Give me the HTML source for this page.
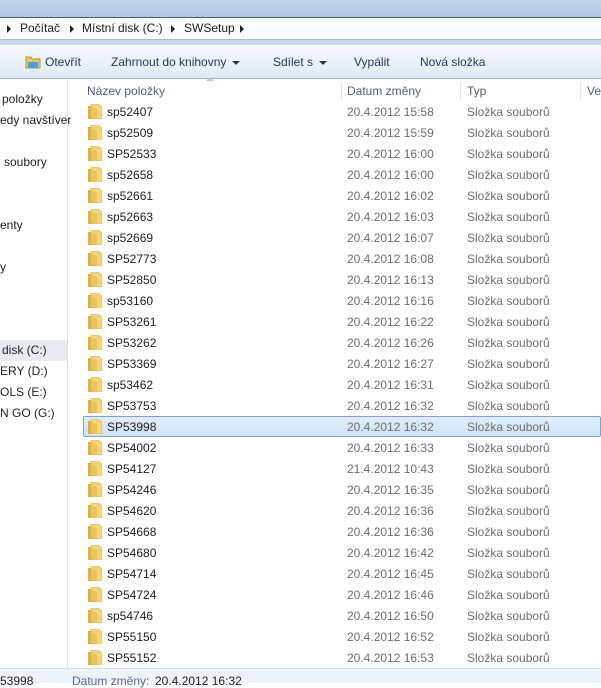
<!DOCTYPE html>
<html><head><meta charset="utf-8"><style>
*{margin:0;padding:0;box-sizing:border-box}
body{width:601px;height:683px;overflow:hidden;background:#fff;font-family:"Liberation Sans","DejaVu Sans",sans-serif;font-size:12px;color:#1e1e1e;position:relative}
.abs{position:absolute;white-space:nowrap}
#title{left:0;top:0;width:601px;height:18px;background:linear-gradient(#c4d5ea,#b3c8e2);border-bottom:1px solid #4a5a70}
#addr{left:0;top:18px;width:601px;height:22px;background:#fbfcfe;border-bottom:1px solid #a9b8cc}
#gap{left:0;top:40px;width:601px;height:5px;background:#c9daef}
#tool{left:0;top:45px;width:601px;height:34px;background:linear-gradient(#f5f9fd,#e0eaf6);border-bottom:1px solid #a0b2c8;border-top:1px solid #fff}
#nav{left:0;top:80px;width:68px;height:588px;border-right:1px solid #dde4ee}
#status{left:0;top:668px;width:601px;height:15px;background:#eef3fa;border-top:1px solid #d6e0ec}
.tri{display:inline-block;width:0;height:0;border-top:4px solid transparent;border-bottom:4px solid transparent;border-left:4px solid #222}
.dd{display:inline-block;width:0;height:0;border-left:4px solid transparent;border-right:4px solid transparent;border-top:4px solid #333;vertical-align:middle;margin-left:6px}
.row{position:absolute;left:83px;width:518px;height:21px}
.row span{position:absolute;top:4px}
.sel{background:linear-gradient(#e3eefb,#cfe2f8);box-shadow:inset 0 0 0 1px #7da2ce;border-radius:2px}
.fold{position:absolute;left:5px;top:3px;width:14px;height:15px}
.hdr{color:#4c607a}
.sep{position:absolute;top:82px;width:1px;height:18px;background:#dde4ee}
</style></head><body>
<div class="abs" id="title"></div>
<div class="abs" id="addr">
 <span class="abs tri" style="left:7px;top:7px"></span>
 <span class="abs" style="left:20px;top:3px">Počítač</span>
 <span class="abs tri" style="left:70px;top:7px"></span>
 <span class="abs" style="left:82px;top:3px">Místní disk (C:)</span>
 <span class="abs tri" style="left:171px;top:7px"></span>
 <span class="abs" style="left:184px;top:3px">SWSetup</span>
 <span class="abs tri" style="left:240px;top:7px"></span>
</div>
<div class="abs" id="gap"></div>
<div class="abs" id="tool">
 <svg class="abs" style="left:25px;top:8px" width="16" height="16"><path d="M1 3h5l1 2h8v9H1z" fill="#e8c86a" stroke="#b8943c"/><rect x="3" y="8" width="10" height="6" fill="#4aa3d8"/></svg>
 <span class="abs" style="left:45px;top:9px;color:#1e395b">Otevřít</span>
 <span class="abs" style="left:111px;top:9px;color:#1e395b">Zahrnout do knihovny<i class="dd"></i></span>
 <span class="abs" style="left:273px;top:9px;color:#1e395b">Sdílet s<i class="dd"></i></span>
 <span class="abs" style="left:354px;top:9px;color:#1e395b">Vypálit</span>
 <span class="abs" style="left:420px;top:9px;color:#1e395b">Nová složka</span>
</div>
<div class="abs" id="nav">
 <span class="abs" style="left:2px;top:12px">položky</span>
 <span class="abs" style="left:0;top:33px">edy navštíver</span>
 <span class="abs" style="left:4px;top:75px">soubory</span>
 <span class="abs" style="left:0;top:138px">enty</span>
 <span class="abs" style="left:0;top:180px">y</span>
 <div class="abs" style="left:0;top:260px;width:67px;height:21px;background:#e8ecf2"></div>
 <span class="abs" style="left:2px;top:263px">disk (C:)</span>
 <span class="abs" style="left:0;top:284px">ERY (D:)</span>
 <span class="abs" style="left:0;top:305px">OLS (E:)</span>
 <span class="abs" style="left:0;top:326px">N GO (G:)</span>
</div>
<span class="abs hdr" style="left:87px;top:84px">Název položky</span>
<span class="abs" style="left:206px;top:77px;width:0;height:0;border-left:4px solid transparent;border-right:4px solid transparent;border-bottom:4px solid #b8c8dc"></span>
<div class="sep" style="left:341px"></div>
<span class="abs hdr" style="left:347px;top:84px">Datum změny</span>
<div class="sep" style="left:460px"></div>
<span class="abs hdr" style="left:467px;top:84px">Typ</span>
<div class="sep" style="left:580px"></div>
<span class="abs hdr" style="left:587px;top:84px">Ve</span>
<div id="rows"></div>
<div class="abs" id="status">
 <span class="abs" style="left:0;top:5px">53998</span>
 <span class="abs" style="left:72px;top:5px;color:#5a6a80">Datum změny:</span>
 <span class="abs" style="left:155px;top:5px">20.4.2012 16:32</span>
</div>
<script>
var d=[["sp52407","20.4.2012 15:58"],["sp52509","20.4.2012 15:59"],["SP52533","20.4.2012 16:00"],["sp52658","20.4.2012 16:00"],["sp52661","20.4.2012 16:02"],["sp52663","20.4.2012 16:03"],["sp52669","20.4.2012 16:07"],["SP52773","20.4.2012 16:08"],["SP52850","20.4.2012 16:13"],["sp53160","20.4.2012 16:16"],["SP53261","20.4.2012 16:22"],["SP53262","20.4.2012 16:26"],["SP53369","20.4.2012 16:27"],["sp53462","20.4.2012 16:31"],["SP53753","20.4.2012 16:32"],["SP53998","20.4.2012 16:32"],["SP54002","20.4.2012 16:33"],["SP54127","21.4.2012 10:43"],["SP54246","20.4.2012 16:35"],["SP54620","20.4.2012 16:36"],["SP54668","20.4.2012 16:36"],["SP54680","20.4.2012 16:42"],["SP54714","20.4.2012 16:45"],["SP54724","20.4.2012 16:46"],["sp54746","20.4.2012 16:50"],["SP55150","20.4.2012 16:52"],["SP55152","20.4.2012 16:53"]];
var h="";
d.forEach(function(r,i){
h+='<div class="row'+(i==15?' sel':'')+'" style="top:'+(101+i*21)+'px"><svg class="fold" viewBox="0 0 14 15"><path d="M0 2h9v13H0z" fill="#d9b34a"/><path d="M3 0h7l4 3v12H5L3 13z" fill="#f3d57c" stroke="#d1ac4c" stroke-width=".6"/><path d="M4 3l5 2v10H4z" fill="#e9c35a"/></svg><span style="left:24px">'+r[0]+'</span><span style="left:264px;color:#6d6d6d">'+r[1]+'</span><span style="left:384px;color:#6d6d6d">Složka souborů</span></div>';
});
document.getElementById("rows").innerHTML=h;
</script>
</body></html>
